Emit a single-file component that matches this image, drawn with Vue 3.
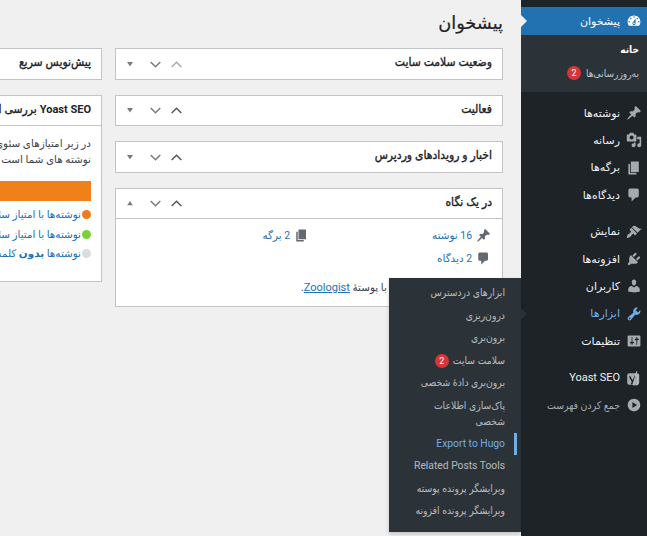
<template>
  <div class="admin">
    <aside class="sidebar">
      <ul class="menu">
        <template v-for="item in menu" :key="item.label">
          <li :class="['menu-item', item.cls]">
            <span v-if="item.cls === 'current' || item.flyout" class="notch"></span>
            <svg v-if="item.icon === 'yoast'" class="icon" viewBox="0 0 20 20">
              <rect x="1.5" y="4" width="15" height="14.500" rx="2.500" />
              <path class="yoast-y" d="M4.500 8l3.600 6.500M12 7l-5.200 11" />
              <path class="yoast-slash" d="M13.500 1.500L9 18.500h5.500V5" />
            </svg>
            <svg v-else class="icon" :class="{ flip: item.flip }" viewBox="0 0 20 20"><path :d="icons[item.icon]" /></svg>
            <span class="label">{{ item.label }}</span>
            <ul v-if="item.flyout" class="flyout">
              <li v-for="sub in flyout" :key="sub.label" :class="['fly-item', { active: sub.active }]">
                <span class="fly-label">{{ sub.label }}</span>
                <span v-if="sub.badge" class="badge">{{ sub.badge }}</span>
              </li>
            </ul>
          </li>
          <li v-if="item.cls === 'current'" class="submenu">
            <div class="sub-row strong">خانه</div>
            <div class="sub-row">به‌روزرسانی‌ها <span class="badge">2</span></div>
          </li>
          <li v-if="item.sep" class="sep"></li>
        </template>
      </ul>
    </aside>

    <main class="content">
      <h1>پیشخوان</h1>
      <div class="columns">
        <div class="column">
          <section v-for="box in mainBoxes" :key="box.title" class="postbox">
            <header class="box-head" :class="{ tall: box.tall }">
              <h2>{{ box.title }}</h2>
              <div class="controls">
                <svg class="chev" :class="{ off: box.first }" viewBox="0 0 11 7"><polyline points="0.7,6 5.5,1.2 10.3,6" /></svg>
                <svg class="chev down" viewBox="0 0 11 7"><polyline points="0.7,1 5.5,5.8 10.3,1" /></svg>
                <svg class="tri" :class="{ open: box.open }" viewBox="0 0 7 5"><polygon points="0,0 7,0 3.5,5" /></svg>
              </div>
            </header>
            <div v-if="box.open" class="glance">
              <ul class="glance-list">
                <li><svg viewBox="0 0 20 20"><path :d="icons.post" /></svg><a>16 نوشته</a></li>
                <li><svg viewBox="0 0 20 20"><path :d="icons.page" /></svg><a>2 برگه</a></li>
                <li><svg viewBox="0 0 20 20"><path :d="icons.comment" /></svg><a>2 دیدگاه</a></li>
              </ul>
              <p class="theme-line"><a>وردپرس نگارش 5.8.1</a> با پوستهٔ <a class="under">Zoologist</a>.</p>
            </div>
          </section>
        </div>

        <div class="column">
          <section class="postbox">
            <header class="box-head tall">
              <h2>پیش‌نویس سریع</h2>
              <div class="controls">
                <svg class="chev off" viewBox="0 0 11 7"><polyline points="0.7,6 5.5,1.2 10.3,6" /></svg>
                <svg class="chev down" viewBox="0 0 11 7"><polyline points="0.7,1 5.5,5.8 10.3,1" /></svg>
                <svg class="tri" viewBox="0 0 7 5"><polygon points="0,0 7,0 3.5,5" /></svg>
              </div>
            </header>
          </section>
          <section class="postbox">
            <header class="box-head">
              <h2><b>Yoast SEO</b> بررسی اجمالی نوشته‌ها</h2>
              <div class="controls">
                <svg class="chev" viewBox="0 0 11 7"><polyline points="0.7,6 5.5,1.2 10.3,6" /></svg>
                <svg class="chev down" viewBox="0 0 11 7"><polyline points="0.7,1 5.5,5.8 10.3,1" /></svg>
                <svg class="tri" viewBox="0 0 7 5"><polygon points="0,0 7,0 3.5,5" /></svg>
              </div>
            </header>
            <div class="yoast">
              <p>در زیر امتیازهای سئوی نوشته‌های منتشر شده شما را می‌بینید. اکنون زمان مناسبی برای بهبود برخی از<br />نوشته های شما است تا امتیاز بهتری بگیرند.</p>
              <div class="score-bar"></div>
              <ul class="legend">
                <li><i class="dot orange"></i><a>نوشته‌ها با امتیاز سئوی قابل قبول</a></li>
                <li><i class="dot green"></i><a>نوشته‌ها با امتیاز سئوی خوب</a></li>
                <li><i class="dot grey"></i><a>نوشته‌ها <b>بدون</b> کلمه کلیدی</a></li>
              </ul>
            </div>
          </section>
        </div>
      </div>
    </main>
  </div>
</template>

<script setup>
const icons = {
  dashboard: 'M3.76 16h12.48c1.1-1.37 1.76-3.11 1.76-5 0-4.42-3.58-8-8-8s-8 3.58-8 8c0 1.89.66 3.63 1.76 5zM10 4c.55 0 1 .45 1 1s-.45 1-1 1-1-.45-1-1 .45-1 1-1zM6 6c.55 0 1 .45 1 1s-.45 1-1 1-1-.45-1-1 .45-1 1-1zm8 0c.55 0 1 .45 1 1s-.45 1-1 1-1-.45-1-1 .45-1 1-1zm-5.37 5.55L12 7v6c0 1.1-.9 2-2 2s-2-.9-2-2c0-.57.24-1.08.63-1.45zM4 10c.55 0 1 .45 1 1s-.45 1-1 1-1-.45-1-1 .45-1 1-1zm12 0c.55 0 1 .45 1 1s-.45 1-1 1-1-.45-1-1 .45-1 1-1zm-5 3c0-.55-.45-1-1-1s-1 .45-1 1 .45 1 1 1 1-.45 1-1z',
  post: 'M10.44 3.02l1.82-1.82 6.36 6.35-1.83 1.82c-1.05-.68-2.48-.57-3.41.36l-.75.75c-.92.93-1.04 2.35-.35 3.41l-1.83 1.82-2.41-2.41-2.8 2.79c-.42.42-3.38 2.71-3.8 2.29s1.86-3.39 2.28-3.81l2.79-2.79L4.1 9.36l1.83-1.82c1.05.69 2.48.57 3.4-.36l.75-.75c.93-.92 1.05-2.35.36-3.41z',
  media: 'M13 11V4c0-.55-.45-1-1-1h-1.67L9 1H5L3.67 3H2c-.55 0-1 .45-1 1v7c0 .55.45 1 1 1h10c.55 0 1-.45 1-1zM7 4.5c1.38 0 2.5 1.12 2.5 2.5S8.38 9.5 7 9.5 4.5 8.38 4.5 7 5.62 4.5 7 4.5zM14 6h5v10.5c0 1.38-1.12 2.5-2.5 2.5S14 17.88 14 16.5s1.12-2.5 2.5-2.5c.17 0 .34.02.5.05V9h-3V6zm-4 8.05V13h2v3.5c0 1.38-1.12 2.5-2.5 2.5S7 17.88 7 16.5 8.12 14 9.5 14c.17 0 .34.02.5.05z',
  page: 'M6 15V2h10v13H6zm-1 1h8v2H3V5h2v11z',
  comment: 'M5 2h9c1.1 0 2 .9 2 2v7c0 1.1-.9 2-2 2h-2l-5 5v-5H5c-1.1 0-2-.9-2-2V4c0-1.1.9-2 2-2z',
  appearance: 'M14.48 11.06L7.41 3.99l1.5-1.5c.5-.56 2.3-.47 3.51.32 1.21.8 1.43 1.28 2.91 2.1 1.18.64 2.45 1.26 4.45.85zm-.71.71L6.7 4.7 4.93 6.47c-.39.39-.39 1.02 0 1.41l1.06 1.06c.39.39.39 1.03 0 1.42-.6.6-1.43 1.11-2.21 1.69-.35.26-.7.53-1.01.84-1.34 1.34-1.86 2.91-1.71 4.59 1.7.19 3.26-.35 4.61-1.7.31-.31.58-.66.84-1.01.58-.78 1.09-1.61 1.69-2.21.39-.39 1.03-.39 1.42 0l1.06 1.06c.39.39 1.02.39 1.41 0z',
  plugins: 'M13.11 4.36L9.87 7.6 8 5.73l3.24-3.24c.35-.34 1.05-.2 1.56.32.52.51.66 1.21.31 1.55zm-8 1.77l.91-1.12 9.01 9.01-1.19.84c-.71.71-2.63 1.16-3.82 1.16H6.14L4.9 17.26c-.59.59-1.54.59-2.12 0-.59-.58-.59-1.53 0-2.12l1.24-1.24v-3.88c0-1.13.4-3.19 1.09-3.89zm7.26 3.97l3.24-3.24c.34-.35 1.04-.21 1.55.31.52.51.66 1.21.31 1.55l-3.24 3.25z',
  users: 'M10 9.25c-2.27 0-2.73-3.44-2.73-3.44C7 4.02 7.82 2 9.97 2c2.16 0 2.98 2.02 2.71 3.81 0 0-.41 3.44-2.68 3.44zm0 2.57L12.72 10c2.39 0 4.52 2.33 4.52 4.53v2.49s-3.65 1.13-7.24 1.13c-3.65 0-7.24-1.13-7.24-1.13v-2.49c0-2.25 1.94-4.48 4.47-4.48z',
  tools: 'M16.68 9.77c-1.34 1.34-3.3 1.67-4.95.99l-5.41 6.52c-.99.99-2.59.99-3.58 0s-.99-2.59 0-3.57l6.52-5.42c-.68-1.65-.35-3.61.99-4.95 1.28-1.28 3.12-1.62 4.72-1.06l-2.89 2.89 2.82 2.82 2.86-2.87c.53 1.58.18 3.39-1.08 4.65zM3.81 16.21c.4.39 1.04.39 1.43 0 .4-.4.4-1.04 0-1.43-.39-.4-1.03-.4-1.43 0-.39.39-.39 1.03 0 1.43z',
  settings: 'M18 16V4c0-.55-.45-1-1-1H3c-.55 0-1 .45-1 1v12c0 .55.45 1 1 1h14c.55 0 1-.45 1-1zM8 11h1c.55 0 1 .45 1 1s-.45 1-1 1H8v1.5c0 .28-.22.5-.5.5s-.5-.22-.5-.5V13H6c-.55 0-1-.45-1-1s.45-1 1-1h1V5.5c0-.28.22-.5.5-.5s.5.22.5.5V11zm5-2h-1c-.55 0-1-.45-1-1s.45-1 1-1h1V5.5c0-.28.22-.5.5-.5s.5.22.5.5V7h1c.55 0 1 .45 1 1s-.45 1-1 1h-1v5.5c0 .28-.22.5-.5.5s-.5-.22-.5-.5V9z',
  collapse: 'M10 2.16c4.33 0 7.84 3.51 7.84 7.84s-3.51 7.84-7.84 7.84S2.16 14.33 2.16 10 5.710 2.16 10 2.16zm2 11.720V6.120L6.180 9.970z',
}

const menu = [
  { label: 'پیشخوان', icon: 'dashboard', cls: 'current' },
  { label: 'نوشته‌ها', icon: 'post' },
  { label: 'رسانه', icon: 'media' },
  { label: 'برگه‌ها', icon: 'page' },
  { label: 'دیدگاه‌ها', icon: 'comment', sep: true },
  { label: 'نمایش', icon: 'appearance' },
  { label: 'افزونه‌ها', icon: 'plugins' },
  { label: 'کاربران', icon: 'users' },
  { label: 'ابزارها', icon: 'tools', cls: 'hover', flyout: true },
  { label: 'تنظیمات', icon: 'settings', sep: true },
  { label: 'Yoast SEO', icon: 'yoast' },
  { label: 'جمع کردن فهرست', icon: 'collapse', cls: 'collapse', flip: true },
]

const flyout = [
  { label: 'ابزارهای دردسترس' },
  { label: 'درون‌ریزی' },
  { label: 'برون‌بری' },
  { label: 'سلامت سایت', badge: 2 },
  { label: 'برون‌بری دادهٔ شخصی' },
  { label: 'پاک‌سازی اطلاعات شخصی' },
  { label: 'Export to Hugo', active: true },
  { label: 'Related Posts Tools' },
  { label: 'ویرایشگر پرونده پوسته' },
  { label: 'ویرایشگر پرونده افزونه' },
]

const mainBoxes = [
  { title: 'وضعیت سلامت سایت', first: true, tall: true },
  { title: 'فعالیت' },
  { title: 'اخبار و رویدادهای وردپرس', tall: true },
  { title: 'در یک نگاه', open: true },
]
</script>

<style scoped>
.admin {
  position: relative;
  display: flex;
  width: 647px;
  height: 536px;
  overflow: hidden;
  direction: rtl;
  background: #f0f0f1;
  color: #1d2327;
  font-family: Roboto, "DejaVu Sans", sans-serif;
  font-size: 10.4px;
}
ul { list-style: none; margin: 0; padding: 0; }
a { color: #2271b1; }

.sidebar { flex: none; width: 126px; background: #1d2327; padding-top: 7px; position: relative; z-index: 2; }
.menu-item {
  position: relative;
  display: flex;
  align-items: center;
  gap: 6px;
  height: 27.3px;
  padding-right: 5px;
  color: #f0f0f1;
  font-size: 11px;
  white-space: nowrap;
}
.icon { flex: none; width: 16px; height: 16px; fill: #a7aaad; }
.icon.flip { transform: rotate(180deg); }
.yoast-y { fill: none; stroke: #1d2327; stroke-width: 1.8; }
.yoast-slash { fill: none; stroke: #c3c4c7; stroke-width: 1.2; }
.menu-item.current { height: 28px; background: #2271b1; color: #fff; }
.current .icon { fill: #fff; }
.menu-item.hover { color: #72aee6; }
.hover .icon { fill: #72aee6; }
.menu-item.collapse { color: #a7aaad; font-family: Roboto, "DejaVu Sans Condensed", sans-serif; font-size: 10.4px; }
.notch {
  position: absolute;
  left: 0;
  top: 50%;
  margin-top: -6px;
  border-style: solid;
  border-width: 6px 0 6px 6px;
  border-color: transparent transparent transparent #f0f0f1;
}
.hover .notch { border-left-color: #2c3338; }
.submenu {
  background: #2c3338;
  padding: 2px 8px 7px 0;
  margin-bottom: 7.5px;
  font-family: Roboto, "DejaVu Sans Condensed", sans-serif;
  font-size: 10.1px;
  color: rgba(240, 246, 252, 0.75);
}
.sub-row { height: 24px; display: flex; align-items: center; gap: 5px; }
.sub-row.strong { color: #fff; font-weight: 700; }
.sep { height: 9.5px; }
.badge {
  display: inline-flex;
  align-items: center;
  justify-content: center;
  width: 14px;
  height: 14px;
  border-radius: 50%;
  background: #d63638;
  color: #fff;
  font-size: 9px;
}

.flyout {
  position: absolute;
  top: -22px;
  right: 100%;
  width: 132px;
  padding: 4px 0 9px;
  background: #2c3338;
  box-shadow: 0 2px 4px rgba(0, 0, 0, 0.2);
  font-family: Roboto, "DejaVu Sans Condensed", sans-serif;
  font-size: 10.3px;
  color: rgba(240, 246, 252, 0.7);
  white-space: normal;
}
.fly-item { position: relative; display: flex; align-items: center; gap: 4px; min-height: 22.5px; padding: 3px 16px 3px 14px; line-height: 16px; box-sizing: border-box; }
.fly-item.active { color: #72aee6; }
.fly-item.active::after { content: ""; position: absolute; top: 0; bottom: 0; right: 4px; width: 3px; background: #72aee6; }

.content { flex: 1; min-width: 0; padding-right: 18px; }
h1 { margin: 0; padding-top: 11px; height: 48px; box-sizing: border-box; font-size: 17.8px; font-weight: 400; line-height: 24px; -webkit-text-stroke: 0.2px #1d2327; }
.columns { display: flex; gap: 13px; }
.column { flex: none; width: 388px; }
.postbox { background: #fff; border: 1px solid #c3c4c7; margin-bottom: 15px; box-sizing: border-box; }
.box-head { display: flex; align-items: center; justify-content: space-between; height: 29px; padding: 0 10px 0 0; }
.box-head.tall { height: 30px; }
h2 {
  margin: 0 0 4px;
  font-family: Roboto, "DejaVu Sans Condensed", sans-serif;
  font-size: 12px;
  font-weight: 400;
  white-space: nowrap;
  -webkit-text-stroke: 0.35px #1d2327;
}
h2 b { font-size: 11px; -webkit-text-stroke: 0; }
.controls { display: flex; align-items: center; padding-left: 11px; }
.chev { width: 11px; height: 7px; margin-left: 10px; fill: none; stroke: #50575e; stroke-width: 1.5; }
.chev.off { stroke: #a7aaad; }
.chev.down { margin-left: 17px; stroke: #787c82; }
.tri { width: 6px; height: 4.5px; fill: #787c82; }
.tri.open { transform: rotate(180deg); }

.glance { border-top: 1px solid #c3c4c7; padding: 5px 11px 11px; height: 88px; box-sizing: border-box; }
.glance-list { display: flex; flex-wrap: wrap; }
.glance-list li { display: flex; align-items: center; gap: 4px; width: 50%; height: 23px; }
.glance-list svg { width: 15px; height: 15px; fill: #646970; flex: none; }
.theme-line { margin: 11px 0 0; padding-right: 8px; white-space: nowrap; color: #3c434a; }
.under { text-decoration: underline; font-size: 11px; }

.yoast { border-top: 1px solid #c3c4c7; padding: 10px 10px 0; height: 156px; box-sizing: border-box; }
.yoast p { margin: 0 0 13px; line-height: 16px; white-space: nowrap; color: #3c434a; }
.score-bar { height: 20px; background: #f0801a; margin-bottom: 4px; }
.legend li { display: flex; align-items: center; gap: 1px; height: 19.5px; white-space: nowrap; }
.dot { flex: none; width: 9px; height: 9px; border-radius: 50%; }
.orange { background: #ee7c1b; }
.green { background: #7ad03a; }
.grey { background: #dcdcdc; }
</style>
